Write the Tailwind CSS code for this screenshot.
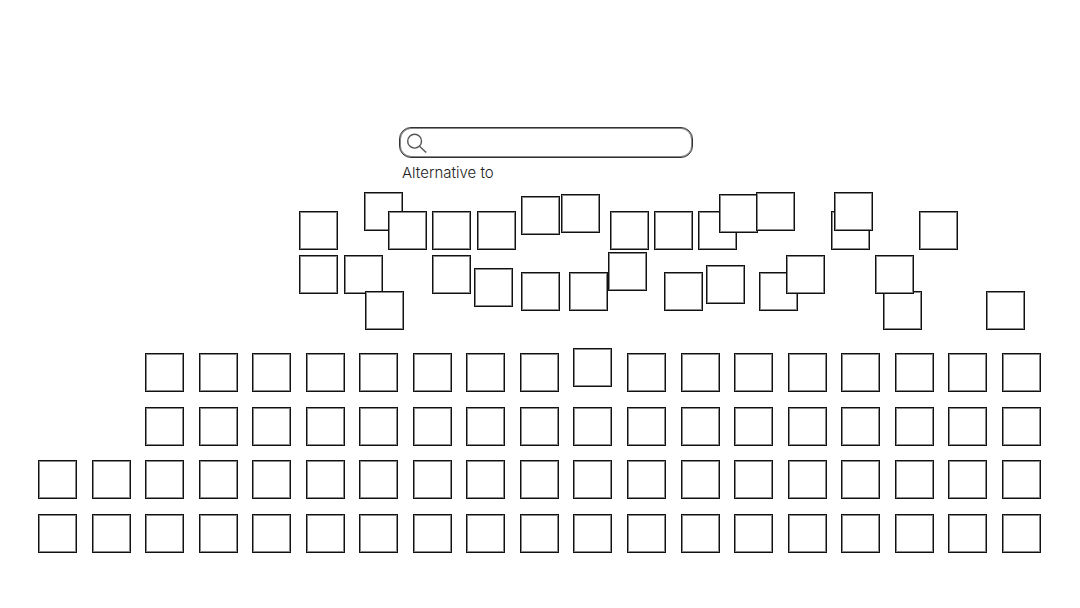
<!DOCTYPE html>
<html lang="en">
<head>
<meta charset="utf-8">
<meta name="viewport" content="width=device-width, initial-scale=1">
<title>Alternative to</title>
<script src="https://cdn.jsdelivr.net/npm/@tailwindcss/browser@4"></script>
</head>
<body class="min-h-screen bg-white font-['Inter',sans-serif] text-[#222]">
<main class="w-full pt-[127px]">
  <form class="mx-auto w-[294px] translate-x-[6px]" role="search">
    <div class="flex h-[31px] items-center rounded-xl border border-[#333] pl-[7px] shadow-[inset_0_0_0_1px_#888]">
      <svg class="h-5 w-5 shrink-0" viewBox="0 0 20 20" fill="none" stroke="#555" stroke-width="1.4" aria-hidden="true"><circle cx="7.6" cy="8.2" r="6.9"/><path d="M12.5 13.2 19.2 19.4"/></svg>
      <input id="search" type="text" class="h-full min-w-0 flex-1 bg-transparent px-2 text-sm outline-none">
    </div>
    <label for="search" class="mt-[3px] block pl-[3px] text-[15px] leading-6 font-light">Alternative to</label>
  </form>

  <!-- Loose tiles: free canvas, later tiles lie over earlier ones -->
  <div id="scatter" class="relative mt-[7px] h-[137px] w-full"></div>

  <!-- Ordered tiles -->
  <div id="rows" class="mt-[24px] mr-[39px] ml-[38px] grid h-[200px] grid-cols-[repeat(19,39px)] grid-rows-[repeat(4,39px)] content-between justify-between"></div>
</main>
<script>
  const tileClass = 'size-[39px] border border-[#111] bg-white shadow-[inset_0_0_0_1px_#888]';
  const loose = [
    [299,19],[364,0],[388,19],[432,19],[477,19],[521,4],[561,2],[610,19],[654,19],[698,19],[719,2],[756,0],
    [831,19],[834,0],[919,19],
    [299,63],[344,63],[365,99],[432,63],[474,76],[521,80],[569,80],[608,60],[664,80],[706,73],[759,80],[786,63],
    [883,99],[875,63],[986,99]
  ];
  const scatter = document.getElementById('scatter');
  for (const [x, y] of loose) {
    const tile = document.createElement('div');
    tile.className = 'absolute ' + tileClass;
    tile.style.left = x + 'px';
    tile.style.top = y + 'px';
    scatter.append(tile);
  }
  const rows = document.getElementById('rows');
  [17, 17, 19, 19].forEach((count, row) => {
    for (let i = 0; i < count; i++) {
      const tile = document.createElement('div');
      tile.className = tileClass;
      if (count === 17 && i === 0) tile.classList.add('col-start-3');
      if (row === 0 && i === 8) tile.classList.add('-translate-y-[5px]');
      rows.append(tile);
    }
  });
</script>
</body>
</html>
